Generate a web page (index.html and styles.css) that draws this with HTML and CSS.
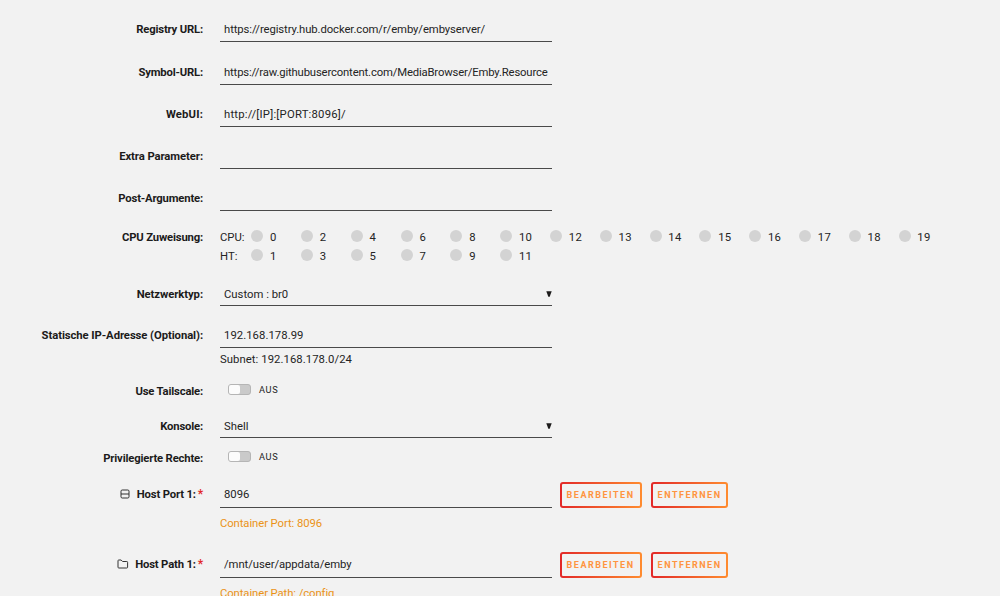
FILE: index.html
```html
<!DOCTYPE html>
<html lang="de">
<head>
    <meta charset="UTF-8">
    <meta name="viewport" content="width=device-width, initial-scale=1.0">
    <title>Container aktualisieren</title>
    <link rel="stylesheet" href="styles.css">
</head>
<body>
    <form class="settings">
        <div class="row">
            <label class="label">Registry URL:</label>
            <input class="field url" type="text" value="https://registry.hub.docker.com/r/emby/embyserver/">
        </div>
        <div class="row row-symbol">
            <label class="label">Symbol-URL:</label>
            <input class="field symbol-url" type="text" value="https://raw.githubusercontent.com/MediaBrowser/Emby.Resource">
        </div>
        <div class="row">
            <label class="label webui">WebUI:</label>
            <input class="field webui-url" type="text" value="http://[IP]:[PORT:8096]/">
        </div>
        <div class="row">
            <label class="label extra">Extra Parameter:</label>
            <input class="field" type="text">
        </div>
        <div class="row">
            <label class="label">Post-Argumente:</label>
            <input class="field" type="text">
        </div>

        <div class="row row-cpu">
            <label class="label">CPU Zuweisung:</label>
            <div class="cpu-list">
                <div class="cpu-line">
                    <span class="cpu-name">CPU:</span>
                    <span class="core">0</span><span class="core">2</span><span class="core">4</span><span class="core">6</span><span class="core">8</span><span class="core">10</span><span class="core">12</span><span class="core">13</span><span class="core">14</span><span class="core">15</span><span class="core">16</span><span class="core">17</span><span class="core">18</span><span class="core">19</span>
                </div>
                <div class="cpu-line">
                    <span class="cpu-name">HT:</span>
                    <span class="core">1</span><span class="core">3</span><span class="core">5</span><span class="core">7</span><span class="core">9</span><span class="core">11</span>
                </div>
            </div>
        </div>

        <div class="row row-network">
            <label class="label extra">Netzwerktyp:</label>
            <div class="field select"><span>Custom : br0</span><svg class="arrow" viewBox="0 0 6 6"><path d="M0.3 0.3h5.4L3.7 5.7H2.3z"/></svg></div>
        </div>

        <div class="row row-ip">
            <label class="label extra">Statische IP-Adresse (Optional):</label>
            <div class="stack">
                <input class="field ip-value" type="text" value="192.168.178.99">
                <div class="subnet">Subnet: 192.168.178.0/24</div>
            </div>
        </div>

        <div class="row row-tailscale">
            <label class="label">Use Tailscale:</label>
            <div class="switch"><span class="track"><span class="knob"></span></span><span class="switch-text">AUS</span></div>
        </div>

        <div class="row row-console">
            <label class="label">Konsole:</label>
            <div class="field select"><span>Shell</span><svg class="arrow" viewBox="0 0 6 6"><path d="M0.3 0.3h5.4L3.7 5.7H2.3z"/></svg></div>
        </div>

        <div class="row row-privileged">
            <label class="label">Privilegierte Rechte:</label>
            <div class="switch"><span class="track"><span class="knob"></span></span><span class="switch-text">AUS</span></div>
        </div>

        <div class="row row-config">
            <label class="label required">
                <svg class="icon icon-port" viewBox="0 0 10 10"><rect x="1" y="1" width="8" height="8" rx="1.2"/><path d="M1 5h8"/></svg>
                <span>Host Port 1:</span><span class="star">*</span>
            </label>
            <div class="stack">
                <input class="field port-value" type="text" value="8096">
                <div class="hint">Container Port: 8096</div>
            </div>
            <div class="buttons">
                <button type="button" class="edit">BEARBEITEN</button>
                <button type="button" class="remove">ENTFERNEN</button>
            </div>
        </div>

        <div class="row row-config">
            <label class="label required">
                <svg class="icon icon-path" viewBox="0 0 12 10"><path d="M1 8.2V1.7Q1 1 1.7 1h2.4l1.5 1.5h4.2q.8 0 .8.8v4.9q0 .8-.8.8h-8Q1 9 1 8.2z"/></svg>
                <span>Host Path 1:</span><span class="star">*</span>
            </label>
            <div class="stack">
                <input class="field path-value" type="text" value="/mnt/user/appdata/emby">
                <div class="hint">Container Path: /config</div>
            </div>
            <div class="buttons">
                <button type="button" class="edit">BEARBEITEN</button>
                <button type="button" class="remove">ENTFERNEN</button>
            </div>
        </div>
    </form>
</body>
</html>
```
FILE: styles.css
```css
* {
    box-sizing: border-box;
}

body {
    margin: 0;
    height: 596px;
    overflow: hidden;
    background: #f2f2f2;
    color: #242424;
    font-family: Roboto, "Noto Sans", sans-serif;
    font-size: 11.3px;
}

.settings {
    padding-top: 17px;
}

.row {
    display: flex;
    align-items: flex-start;
    height: 42px;
}

.row-symbol {
    height: 43px;
    padding-top: 1px;
}

.label {
    width: 203px;
    margin-right: 17px;
    line-height: 25px;
    font-weight: bold;
    letter-spacing: -0.18px;
    text-align: right;
    white-space: nowrap;
    color: #1c1b1b;
}

.label.webui {
    letter-spacing: 0.15px;
}

.label.extra {
    letter-spacing: -0.08px;
}

.field {
    display: block;
    width: 332px;
    height: 25px;
    padding: 1px 4px 0;
    border: 0;
    border-bottom: 1px solid #4a4a4a;
    border-radius: 0;
    outline: none;
    background: transparent;
    color: inherit;
    font: inherit;
    line-height: 23px;
}

.url {
    letter-spacing: -0.09px;
}

.symbol-url {
    padding-right: 2px;
    letter-spacing: -0.16px;
}

.webui-url {
    letter-spacing: 0.22px;
}

.path-value {
    letter-spacing: -0.07px;
}

.select {
    display: flex;
    align-items: center;
    justify-content: space-between;
    padding-top: 2px;
    padding-right: 0;
}

.arrow {
    width: 6px;
    height: 6px;
    fill: #1c1b1b;
}

/* CPU pinning */
.row-cpu {
    height: 53px;
}

.row-cpu .label {
    line-height: 19px;
}

.cpu-line {
    display: flex;
    height: 19px;
    line-height: 19px;
}

.cpu-name {
    width: 31.2px;
}

.core {
    display: flex;
    width: 49.8px;
    gap: 6.8px;
    letter-spacing: 0.3px;
}

.core::before {
    content: "";
    width: 12px;
    height: 12px;
    margin-top: 2.4px;
    border-radius: 50%;
    background: #d3d3d3;
}

.row-network .label,
.row-console .label {
    line-height: 27px;
}

.row-ip {
    height: 56px;
}

.ip-value {
    padding-top: 0;
    letter-spacing: 0.05px;
}

.subnet {
    height: 22px;
    line-height: 23px;
    letter-spacing: 0.06px;
}

.row-tailscale {
    height: 34px;
}

.row-console {
    height: 31px;
}

.row-privileged {
    height: 38px;
}

.row-privileged .label {
    line-height: 29px;
}

.row-config {
    height: 69.6px;
}

.row-config .field {
    height: 26px;
}

.row-config .port-value {
    padding-top: 0;
    padding-bottom: 1px;
}

/* toggles */
.switch {
    display: flex;
    align-items: center;
    height: 20px;
    padding-left: 8px;
}

.row-privileged .switch {
    height: 24px;
}

.track {
    width: 23px;
    height: 11px;
    border: 1px solid #b5b5b5;
    border-radius: 3px;
    background: #cacaca;
}

.knob {
    display: block;
    width: 11px;
    height: 9px;
    border-radius: 2px;
    background: #fcfcfc;
}

.switch-text {
    margin-left: 8px;
    font-size: 9.2px;
    letter-spacing: 0.7px;
}

/* ports and paths */
.required {
    display: flex;
    align-items: center;
    justify-content: flex-end;
    height: 25px;
}

.icon {
    margin-bottom: 1px;
    fill: none;
    stroke: #333;
    stroke-width: 1;
}

.icon-port {
    width: 10px;
    height: 10px;
    margin-right: 7px;
}

.icon-path {
    width: 12px;
    height: 10px;
    margin-right: 6px;
}

.star {
    margin-left: 2px;
    font-size: 12px;
    color: #e22828;
}

.hint {
    line-height: 31px;
    letter-spacing: -0.09px;
    color: #eb9316;
}

.buttons {
    display: flex;
    gap: 9px;
    margin-left: 8px;
}

button {
    height: 26px;
    padding: 0;
    border: 2px solid transparent;
    border-radius: 3px;
    background: linear-gradient(#f2f2f2, #f2f2f2) padding-box, linear-gradient(90deg, #e22828, #ff8c2f) border-box;
    color: #ff9440;
    font-family: inherit;
    font-size: 9px;
    font-weight: bold;
    letter-spacing: 1.5px;
    text-align: left;
    text-indent: 4.6px;
    white-space: nowrap;
}

.edit {
    width: 82px;
}

.remove {
    width: 77px;
}
```
